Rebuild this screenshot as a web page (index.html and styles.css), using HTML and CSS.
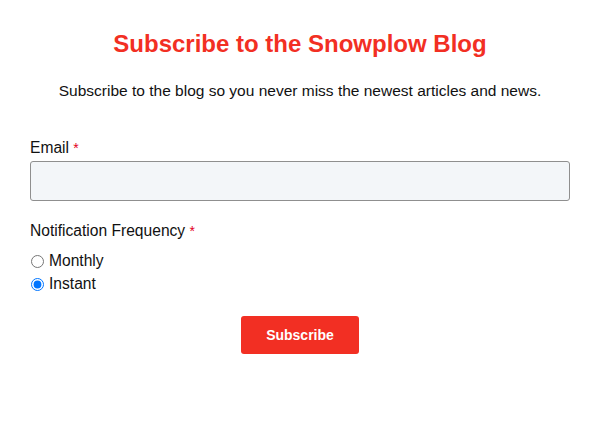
FILE: index.html
```html
<!DOCTYPE html>
<html lang="en">
<head>
    <meta charset="UTF-8">
    <meta name="viewport" content="width=device-width, initial-scale=1.0">
    <title>Subscribe to the Snowplow Blog</title>
    <link rel="stylesheet" href="styles.css">
</head>
<body>
    <div class="container">
        <h1>Subscribe to the Snowplow Blog</h1>
        <p class="intro">Subscribe to the blog so you never miss the newest articles and news.</p>

        <form class="subscribe-form">
            <div class="field">
                <label for="email">Email <span class="required">*</span></label>
                <input type="email" id="email" name="email">
            </div>

            <div class="field">
                <span class="field-label">Notification Frequency <span class="required">*</span></span>
                <label class="radio"><input type="radio" name="frequency" value="monthly"> Monthly</label>
                <label class="radio"><input type="radio" name="frequency" value="instant" checked> Instant</label>
            </div>

            <div class="actions">
                <button type="submit">Subscribe</button>
            </div>
        </form>
    </div>
</body>
</html>
```

FILE: styles.css
```css
:root {
    --primary-color: #f22f23;
    --text-color: #111;
    --input-bg: #f3f6f9;
}
body {
    font-family: 'Liberation Sans', Arial, sans-serif;
    color: var(--text-color);
    margin: 0;
    padding: 0 30px;
    background-color: #fff;
}
h1 {
    color: var(--primary-color);
    font-size: 24px;
    text-align: center;
    margin: 30px 0 0;
    line-height: 28px;
}
.intro {
    font-size: 15.5px;
    text-align: center;
    margin: 23px 0 0;
    line-height: 20px;
}
.subscribe-form {
    margin-top: 37px;
}
.field {
    display: flex;
    flex-direction: column;
    margin-bottom: 20px;
}
.field > label,
.field-label {
    font-size: 15.6px;
    line-height: 20px;
    margin-bottom: 3px;
}
.field-label {
    margin-bottom: 10px;
}
.required {
    color: #e3001b;
    font-size: 14px;
}
input[type="email"] {
    height: 40px;
    box-sizing: border-box;
    border: 1px solid #8f8f8f;
    border-radius: 3px;
    background-color: var(--input-bg);
    font-size: 16px;
    padding: 0 10px;
}
.radio {
    display: flex;
    align-items: center;
    font-size: 15.6px;
    line-height: 23px;
}
.radio input {
    margin: 0 5px 0 1px;
}
.actions {
    display: flex;
    justify-content: center;
    margin-top: -1px;
}
button {
    background-color: var(--primary-color);
    color: #fff;
    border: none;
    border-radius: 3px;
    font-family: inherit;
    font-size: 14px;
    font-weight: bold;
    width: 118px;
    height: 38px;
}
```
